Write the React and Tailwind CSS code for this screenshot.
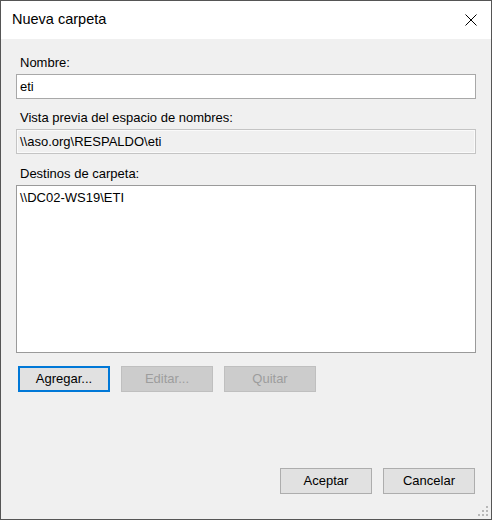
import React from "react";

const font = { fontFamily: '"Liberation Sans", Arial, sans-serif' };

const Button = ({ label, disabled, focused }) => {
  let cls = "w-[92px] h-[26px] flex items-center justify-center text-[13px] ";
  if (disabled) cls += "bg-[#cccccc] border border-[#bfbfbf] text-[#9d9d9d]";
  else if (focused) cls += "bg-[#e1e1e1] border-2 border-[#0078d7] text-black";
  else cls += "bg-[#e1e1e1] border border-[#adadad] text-black";
  return <div className={cls}>{label}</div>;
};

export default function App() {
  return (
    <div
      style={font}
      className="w-[492px] h-[520px] border border-[#555555] bg-[#f0f0f0] flex flex-col relative"
    >
      <div className="h-[38px] bg-white flex items-center justify-between pl-[11px] pr-[14px] shrink-0">
        <span className="text-[14.5px] text-black">Nueva carpeta</span>
        <svg width="12" height="12" viewBox="0 0 12 12">
          <path d="M0.5 0.5 L11.5 11.5 M11.5 0.5 L0.5 11.5" stroke="#000" strokeWidth="1" />
        </svg>
      </div>

      <div className="flex flex-col pl-[15px] pr-[15px] pt-[16px] flex-1">
        <div className="h-[16px] leading-[16px] text-[13px] pl-[4px] text-black">Nombre:</div>
        <div className="mt-[3px] h-[25px] bg-white border border-[#a8a8a8] flex items-center pl-[3px] text-[13px]">
          eti
        </div>

        <div className="mt-[11px] h-[16px] leading-[16px] text-[13px] pl-[4px] text-black">
          Vista previa del espacio de nombres:
        </div>
        <div className="mt-[3px] h-[25px] bg-[#f0f0f0] border border-[#c4c4c4] flex items-center text-[13px]">
          <div className="w-full h-full border border-[#fafafa] flex items-center pl-[2px]">
            \\aso.org\RESPALDO\eti
          </div>
        </div>

        <div className="mt-[12px] h-[16px] leading-[16px] text-[13px] pl-[4px] text-black">
          Destinos de carpeta:
        </div>
        <div className="mt-[3px] h-[168px] bg-white border border-[#9a9a9a] text-[13px] pl-[3px] pt-[2px]">
          \\DC02-WS19\ETI
        </div>

        <div className="mt-[13px] flex gap-[11px] pl-[2px]">
          <Button label="Agregar..." focused />
          <Button label="Editar..." disabled />
          <Button label="Quitar" disabled />
        </div>

        <div className="mt-auto mb-[25px] flex justify-end gap-[11px] pr-[1px]">
          <Button label="Aceptar" />
          <Button label="Cancelar" />
        </div>
      </div>

      <svg className="absolute right-[3px] bottom-[3px]" width="10" height="10" viewBox="0 0 10 10">
        <rect x="8" y="0" width="2" height="2" fill="#b8b8b8" />
        <rect x="4" y="4" width="2" height="2" fill="#b8b8b8" />
        <rect x="8" y="4" width="2" height="2" fill="#b8b8b8" />
        <rect x="0" y="8" width="2" height="2" fill="#b8b8b8" />
        <rect x="4" y="8" width="2" height="2" fill="#b8b8b8" />
        <rect x="8" y="8" width="2" height="2" fill="#b8b8b8" />
      </svg>
    </div>
  );
}
